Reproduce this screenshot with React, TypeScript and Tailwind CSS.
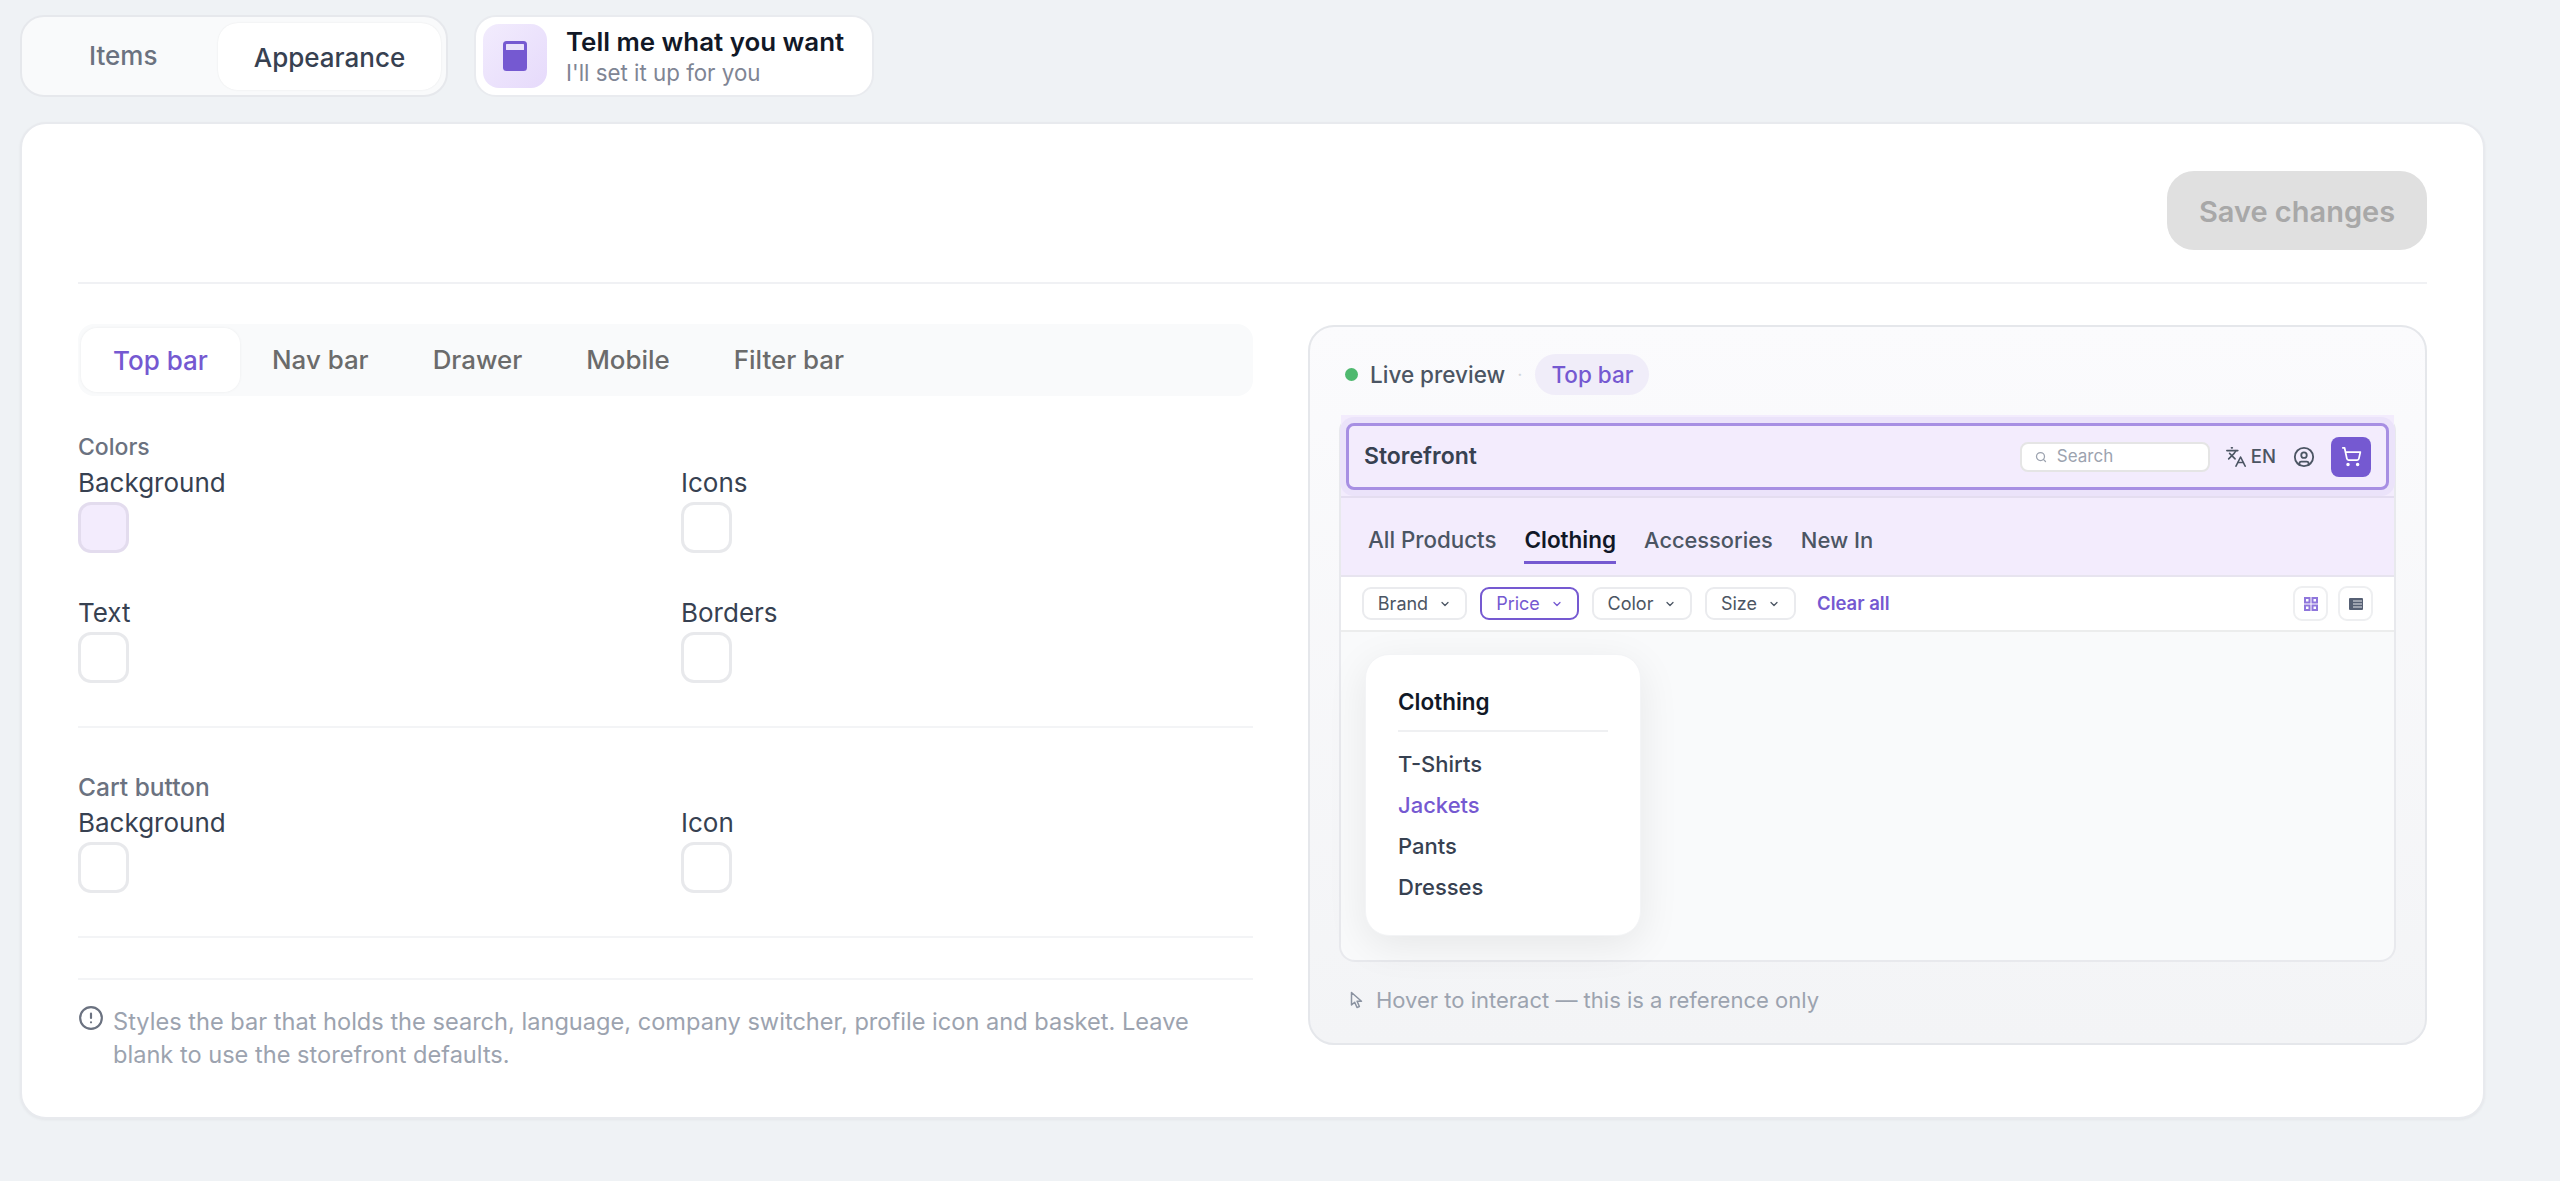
import React from 'react';
import { ChevronDown, CircleAlert, CircleUser, Languages, Search, ShoppingCart } from 'lucide-react';

const Swatch = ({ label, tint }: { label: string; tint?: boolean }) => (
  <div>
    <div className="h-[34px] text-[26px] leading-[34px] text-[#374151]">{label}</div>
    <div
      className={`mt-[2px] h-[51px] w-[51px] rounded-[13px] border-[3px] ${
        tint ? 'border-[#e3dcee] bg-[#f3ecfd]' : 'border-[#e8e9ec] bg-white'
      }`}
    />
  </div>
);

const Chip = ({ label, active, width }: { label: string; active?: boolean; width: string }) => (
  <div
    className={`flex h-[33px] items-center justify-center gap-[11px] rounded-[9px] border-2 bg-white text-[18px] ${width} ${
      active ? 'border-[#7559d1] text-[#7559d1]' : 'border-[#eaebee] text-[#4b5563]'
    }`}
  >
    <span>{label}</span>
    <ChevronDown className="h-[12px] w-[12px]" strokeWidth={2.5} />
  </div>
);

const App: React.FC = () => {
  const subTabs = ['Nav bar', 'Drawer', 'Mobile', 'Filter bar'];
  const menuItems = ['T-Shirts', 'Jackets', 'Pants', 'Dresses'];

  return (
    <div className="h-screen overflow-hidden bg-[#eff2f5] px-[20px] pt-[15px] font-['Inter',sans-serif] antialiased">
      {/* Top tabs + assistant */}
      <div className="flex items-stretch gap-[26px]">
        <div className="relative flex h-[82px] w-[428px] items-center rounded-[24px] border-2 border-[#e6e8ec] bg-[#f9fafb] pl-[196px] pr-[5px]">
          <span className="absolute left-[67px] top-[21px] text-[26px] font-medium leading-[36px] text-[#6b7280]">Items</span>
          <div className="flex h-[67px] w-[223px] items-center justify-center rounded-[20px] bg-white pt-[2px] text-[26px] font-medium text-[#374151] shadow-[0_0_2px_rgba(0,0,0,0.08)]">
            Appearance
          </div>
        </div>
        <div className="flex h-[82px] w-[400px] items-center gap-[19px] rounded-[22px] border-2 border-[#e9ebef] bg-white pl-[7px]">
          <div className="flex h-[64px] w-[64px] items-center justify-center rounded-[16px] bg-gradient-to-br from-[#f2ecfd] to-[#e6dafb]">
            <svg width="24" height="30" viewBox="0 0 24 30">
              <rect width="24" height="30" rx="3.5" fill="#7559d1" />
              <rect x="3" y="3" width="18" height="6" rx="0.5" fill="#e9e1fa" />
            </svg>
          </div>
          <div>
            <div className="text-[25.9px] font-semibold leading-[34px] text-[#111827]">Tell me what you want</div>
            <div className="text-[22.3px] leading-[28px] text-[#7f8594]">I'll set it up for you</div>
          </div>
        </div>
      </div>

      {/* Main card */}
      <div className="mt-[25px] h-[997px] w-[2465px] rounded-[26px] border-2 border-[#e8eaee] bg-white px-[56px] pt-[47px] shadow-[0_1px_3px_rgba(0,0,0,0.05)]">
        <div className="flex justify-end border-b-2 border-[#f0f1f4] pb-[32px]">
          <button className="h-[79px] w-[260px] rounded-[27px] bg-[#e0e0e0] pt-[2px] text-[29px] font-semibold text-[#a8a8a8]">
            Save changes
          </button>
        </div>

        <div className="mt-[40px] grid grid-cols-[1175px_1119px] gap-x-[55px]">
          {/* Settings column */}
          <div>
            <div className="flex h-[72px] items-center rounded-[16px] bg-[#f9fafb] pl-[3px]">
              <div className="flex h-[64px] w-[159px] items-center justify-center rounded-[16px] bg-white pt-[1px] text-[26px] font-medium text-[#7559d1] shadow-[0_0_3px_rgba(0,0,0,0.06)]">
                Top bar
              </div>
              {subTabs.map((tab) => (
                <div key={tab} className="px-[32px] pt-[1px] text-[25.9px] font-medium text-[#6b6b6b]">
                  {tab}
                </div>
              ))}
            </div>

            <div className="mt-[34px] h-[34px] text-[23px] font-medium leading-[34px] text-[#6b7280]">Colors</div>
            <div className="mt-[2px] grid grid-cols-[603px_1fr] gap-y-[43px]">
              <Swatch label="Background" tint />
              <Swatch label="Icons" />
              <Swatch label="Text" />
              <Swatch label="Borders" />
            </div>

            <div className="mt-[43px] h-[2px] bg-[#f3f4f6]" />

            <div className="mt-[42px] h-[34px] text-[24.5px] font-medium leading-[34px] text-[#6b7280]">Cart button</div>
            <div className="mt-[2px] grid grid-cols-[603px_1fr]">
              <Swatch label="Background" />
              <Swatch label="Icon" />
            </div>

            <div className="mt-[43px] h-[2px] bg-[#f3f4f6]" />
            <div className="mt-[40px] h-[2px] bg-[#f3f4f6]" />

            <div className="mt-[25px] flex gap-[9px]">
              <CircleAlert className="h-[26px] w-[26px] shrink-0 text-[#6b7280]" strokeWidth={2} />
              <p className="max-w-[1095px] text-[23.6px] leading-[33px] text-[#9ca3af]">
                Styles the bar that holds the search, language, company switcher, profile icon and basket. Leave blank to use the storefront defaults.
              </p>
            </div>
          </div>

          {/* Live preview */}
          <div className="mt-[1px] h-[720px] rounded-[26px] border-2 border-[#e5e7eb] bg-gradient-to-b from-[#fbfbfd] to-[#f3f4f6] px-[29px] pt-[27px]">
            <div className="flex h-[41px] items-center pl-[6px]">
              <span className="h-[13px] w-[13px] rounded-full bg-[#4fb96f]" />
              <span className="ml-[12px] text-[22.5px] font-medium text-[#4b5563]">Live preview</span>
              <span className="ml-[12px] text-[18px] text-[#d1d5db]">·</span>
              <span className="ml-[13px] flex h-[41px] items-center rounded-full bg-[#f0edf9] px-[16px] text-[22.5px] font-medium text-[#7559d1]">
                Top bar
              </span>
            </div>

            <div className="relative mt-[20px] h-[547px] w-[1057px] rounded-[16px] border-x-2 border-b-2 border-[#e8e9ed] bg-[#f9fafb]">
              {/* Store top bar */}
              <div className="border-b-2 border-[#e4ddf0] bg-[#f3ecfd] px-[5px] pb-[6px] pt-[8px]">
                <div className="flex h-[67px] items-center rounded-[8px] border-[3px] border-[#a78fe3] bg-[#f3ecfd] pl-[15px] pr-[15px] shadow-[0_0_0_6px_#ebe3fa]">
                  <span className="text-[23px] font-semibold text-[#374151]">Storefront</span>
                  <div className="ml-auto flex h-[30px] w-[190px] items-center gap-[10px] rounded-[8px] border-2 border-[#e5e5e5] bg-white pl-[13px]">
                    <Search className="h-[12px] w-[12px] text-[#9ca3af]" strokeWidth={2.5} />
                    <span className="text-[17px] text-[#9ca3af]">Search</span>
                  </div>
                  <Languages className="ml-[15px] h-[22px] w-[22px] text-[#4b5563]" strokeWidth={1.75} />
                  <span className="ml-[4px] text-[18.5px] font-medium text-[#4b5563]">EN</span>
                  <CircleUser className="ml-[17px] h-[22px] w-[22px] text-[#4b5563]" strokeWidth={2} />
                  <div className="ml-[16px] flex h-[40px] w-[40px] items-center justify-center rounded-[8px] bg-[#7559d1]">
                    <ShoppingCart className="h-[21px] w-[21px] text-white" strokeWidth={2} />
                  </div>
                </div>
              </div>

              {/* Store nav */}
              <div className="flex h-[79px] items-start gap-[28px] border-b-2 border-[#e7e4ef] bg-[#f3ecfd] pl-[27px] pt-[28px]">
                <span className="text-[22.3px] font-medium leading-[28px] text-[#4b5563]">All Products</span>
                <span className="border-b-[3px] border-[#7559d1] pb-[7px] text-[22.5px] font-semibold leading-[28px] text-[#111827]">
                  Clothing
                </span>
                <span className="text-[21.8px] font-medium leading-[28px] text-[#4b5563]">Accessories</span>
                <span className="text-[22px] font-medium leading-[28px] text-[#4b5563]">New In</span>
              </div>

              {/* Filter row */}
              <div className="flex h-[55px] items-center gap-[13px] border-b-2 border-[#eceded] bg-white pl-[21px] pr-[21px]">
                <Chip label="Brand" width="w-[105px]" />
                <Chip label="Price" active width="w-[99px]" />
                <Chip label="Color" width="w-[100px]" />
                <Chip label="Size" width="w-[91px]" />
                <span className="ml-[8px] text-[18.5px] font-semibold text-[#7559d1]">Clear all</span>
                <div className="ml-auto flex h-[35px] w-[35px] items-center justify-center rounded-[9px] border-2 border-[#eeeff1]">
                  <svg width="14" height="14" viewBox="0 0 14 14" fill="none" stroke="#8f76dc" strokeWidth="2">
                    <rect x="1" y="1" width="4.5" height="4.5" />
                    <rect x="8.5" y="1" width="4.5" height="4.5" />
                    <rect x="1" y="8.5" width="4.5" height="4.5" />
                    <rect x="8.5" y="8.5" width="4.5" height="4.5" />
                  </svg>
                </div>
                <div className="-ml-[3px] flex h-[35px] w-[35px] items-center justify-center rounded-[9px] border-2 border-[#eeeff1]">
                  <svg width="14" height="12" viewBox="0 0 14 12">
                    <rect width="14" height="12" rx="1" fill="#566074" />
                    <path d="M4 3h9M4 6h9M4 9h9" stroke="#e5e7eb" strokeWidth="1" />
                  </svg>
                </div>
              </div>

              {/* Hovered menu */}
              <div className="absolute left-[24px] top-[239px] h-[282px] w-[276px] rounded-[24px] border border-[#f3f4f6] bg-white px-[32px] shadow-[0_10px_40px_rgba(0,0,0,0.08)]">
                <div className="flex h-[77px] items-end border-b-2 border-[#eff0f2] pb-[14px] text-[22.5px] font-semibold leading-[28px] text-[#111827]">
                  Clothing
                </div>
                <div className="mt-[12px]">
                  {menuItems.map((item) => (
                    <div
                      key={item}
                      className={`h-[41px] text-[22px] font-medium leading-[41px] ${
                        item === 'Jackets' ? 'text-[#7559d1]' : 'text-[#374151]'
                      }`}
                    >
                      {item}
                    </div>
                  ))}
                </div>
              </div>
            </div>

            <div className="mt-[23px] flex items-center gap-[12px] pl-[11px] text-[22px] leading-[30px] text-[#9ca3af]">
              <svg width="14" height="18" viewBox="0 0 14 18" fill="none" stroke="#8b93a1" strokeWidth="1.5" strokeLinejoin="round">
                <path d="M1.5 1.5v12.5l3.2-2.8 2.3 5.3 2.4-1-2.3-5.2h4.4z" />
              </svg>
              <span>Hover to interact — this is a reference only</span>
            </div>
          </div>
        </div>
      </div>
    </div>
  );
};

export default App;
